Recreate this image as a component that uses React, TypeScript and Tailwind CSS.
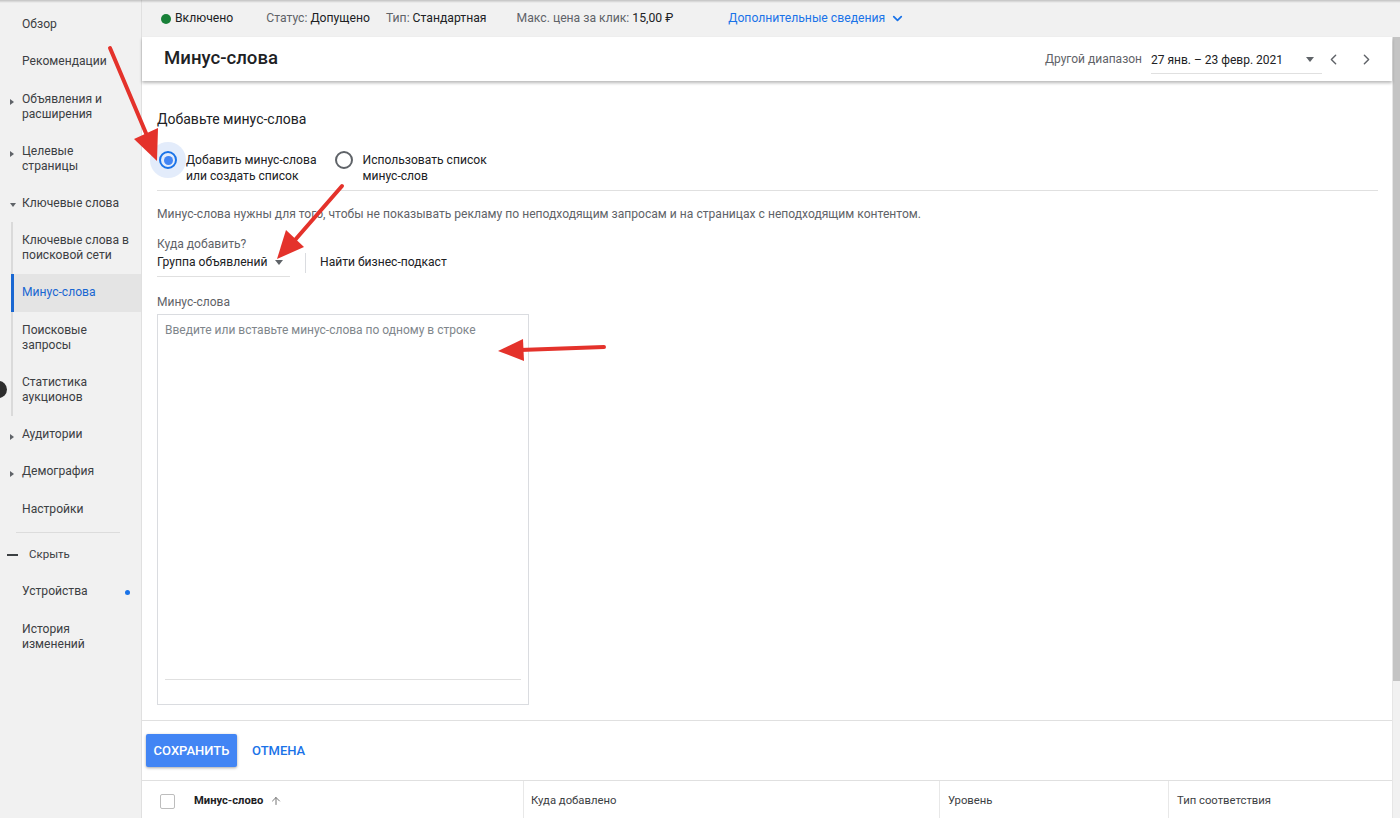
import { ChevronDown, ChevronLeft, ChevronRight, ArrowUp } from 'lucide-react';

function Caret({ down = false, big = false }: { down?: boolean; big?: boolean }) {
  if (big)
    return (
      <span className="block w-0 h-0 border-l-[4.5px] border-r-[4.5px] border-t-[5px] border-l-transparent border-r-transparent border-t-[#5f6368]" />
    );
  return down ? (
    <span className="block w-0 h-0 border-l-[3px] border-r-[3px] border-t-[4px] border-l-transparent border-r-transparent border-t-[#5f6368]" />
  ) : (
    <span className="block w-0 h-0 border-t-[3px] border-b-[3px] border-l-[4px] border-t-transparent border-b-transparent border-l-[#5f6368]" />
  );
}

function NavItem({
  lines,
  caret,
  down,
  dot,
}: {
  lines: string[];
  caret?: boolean;
  down?: boolean;
  dot?: boolean;
}) {
  const tall = lines.length > 1;
  return (
    <div className={`relative flex items-start pl-[22px] pr-2 ${tall ? 'h-[52px] pt-[11px]' : 'h-[37.5px] pt-[11.25px]'}`}>
      {caret && (
        <span className="absolute left-[10px] top-[18px]">
          <Caret down={down} />
        </span>
      )}
      <div className="text-[12.1px] leading-[15px] text-[#3c4043]">
        {lines.map((l) => (
          <div key={l}>{l}</div>
        ))}
      </div>
      {dot && <span className="absolute left-[125px] top-[17px] w-[5px] h-[5px] rounded-full bg-[#1a73e8]" />}
    </div>
  );
}

function SubItem({ lines, active }: { lines: string[]; active?: boolean }) {
  const tall = lines.length > 1;
  return (
    <div
      className={`flex items-start ${tall ? 'h-[52px] pt-[11px]' : 'h-[37.5px] pt-[11.25px]'} ${
        active ? '-ml-[2px] border-l-[3px] border-[#1967d2] bg-[#e4e4e4] pl-[8px]' : 'pl-[9px]'
      }`}
    >
      <div className={`text-[12.1px] leading-[15px] ${active ? 'text-[#1967d2]' : 'text-[#3c4043]'}`}>
        {lines.map((l) => (
          <div key={l}>{l}</div>
        ))}
      </div>
    </div>
  );
}

function Sidebar() {
  return (
    <aside className="w-[142px] shrink-0 bg-[#f1f1f1] border-r border-[#e0e0e0] pt-[5.5px]">
      <NavItem lines={['Обзор']} />
      <NavItem lines={['Рекомендации']} />
      <NavItem lines={['Объявления и', 'расширения']} caret />
      <NavItem lines={['Целевые', 'страницы']} caret />
      <NavItem lines={['Ключевые слова']} caret down />
      <div className="ml-[11px] border-l-2 border-[#dadada]">
        <SubItem lines={['Ключевые слова в', 'поисковой сети']} />
        <SubItem lines={['Минус-слова']} active />
        <SubItem lines={['Поисковые', 'запросы']} />
        <SubItem lines={['Статистика', 'аукционов']} />
      </div>
      <NavItem lines={['Аудитории']} caret />
      <NavItem lines={['Демография']} caret />
      <NavItem lines={['Настройки']} />
      <div className="mx-[16px] mt-[4px] mb-[4px] border-t border-[#dcdcdc] w-[104px]" />
      <div className="flex items-center h-[36px] pl-[7px]">
        <span className="block w-[11px] h-[2px] bg-[#3c4043]" />
        <span className="ml-[11px] text-[11.5px] text-[#3c4043]">Скрыть</span>
      </div>
      <NavItem lines={['Устройства']} dot />
      <NavItem lines={['История', 'изменений']} />
    </aside>
  );
}

function StatusBar() {
  return (
    <div className="h-[37px] shrink-0 flex items-center pl-[19px] bg-[#f1f1f1] text-[12.2px]">
      <span className="w-[10px] h-[10px] rounded-full bg-[#188038]" />
      <span className="ml-[4px] text-[#202124]">Включено</span>
      <span className="ml-[33px] text-[#5f6368]">Статус:</span>
      <span className="ml-[3px] text-[#202124]">Допущено</span>
      <span className="ml-[16px] text-[#5f6368]">Тип:</span>
      <span className="ml-[3px] text-[#202124]">Стандартная</span>
      <span className="ml-[30px] text-[#5f6368]">Макс. цена за клик:</span>
      <span className="ml-[3px] text-[#202124]">15,00 ₽</span>
      <span className="ml-[55px] text-[#1a73e8]">Дополнительные сведения</span>
      <ChevronDown className="ml-[5px] w-[15px] h-[15px] text-[#1a73e8]" strokeWidth={2.8} />
    </div>
  );
}

function Header() {
  return (
    <div className="relative z-10 h-[44px] shrink-0 flex items-center bg-white shadow-[0_2px_3px_rgba(0,0,0,0.28)] pl-[22px] pr-[17px]">
      <h1 className="text-[18.6px] font-medium text-[#202124]">Минус-слова</h1>
      <div className="ml-auto flex items-center">
        <span className="text-[12px] text-[#5f6368]">Другой диапазон</span>
        <div className="ml-[9px] w-[171px] h-[30px] flex items-center justify-between border-b border-[#e0e0e0] pt-[2px]">
          <span className="text-[12px] text-[#202124]">27 янв. – 23 февр. 2021</span>
          <span className="mr-[8px]">
            <Caret big />
          </span>
        </div>
        <ChevronLeft className="ml-[3px] w-[17px] h-[17px] text-[#5f6368]" strokeWidth={2} />
        <ChevronRight className="ml-[16px] w-[17px] h-[17px] text-[#5f6368]" strokeWidth={2} />
      </div>
    </div>
  );
}

function Radio({ checked }: { checked?: boolean }) {
  return (
    <span className="relative w-[18px] h-[18px] shrink-0">
      {checked && <span className="absolute -inset-[9px] rounded-full bg-[#e3ecfb]" />}
      <span
        className={`absolute inset-0 rounded-full border-2 flex items-center justify-center ${
          checked ? 'border-[#1a73e8]' : 'border-[#5f6368]'
        }`}
      >
        {checked && <span className="w-[9px] h-[9px] rounded-full bg-[#4285f4]" />}
      </span>
    </span>
  );
}

function Form() {
  return (
    <div className="flex-1 bg-white flex flex-col">
      <div className="pl-[15px] pr-[14px] pt-[28px]">
        <div className="text-[14px] leading-[20px] text-[#202124]">Добавьте минус-слова</div>
        <div className="mt-[22px] flex items-start">
          <div className="flex items-start ml-[2px]">
            <Radio checked />
            <div className="ml-[9px] pt-[1px] text-[12.1px] leading-[16px] text-[#202124]">
              <div>Добавить минус-слова</div>
              <div>или создать список</div>
            </div>
          </div>
          <div className="flex items-start ml-[18px]">
            <Radio />
            <div className="ml-[10px] pt-[1px] text-[12.1px] leading-[16px] text-[#202124]">
              <div>Использовать список</div>
              <div>минус-слов</div>
            </div>
          </div>
        </div>
        <div className="mt-[6px] border-t border-[#e0e0e0]" />
        <div className="mt-[15px] text-[12.1px] leading-[16px] text-[#5f6368]">
          Минус-слова нужны для того, чтобы не показывать рекламу по неподходящим запросам и на страницах с неподходящим контентом.
        </div>
        <div className="mt-[14px] text-[12.1px] leading-[16px] text-[#5f6368]">Куда добавить?</div>
        <div className="mt-[2px] flex items-start">
          <div className="w-[133px] flex items-center border-b border-[#e0e0e0] pb-[6px]">
            <span className="text-[12.1px] leading-[16px] text-[#202124]">Группа объявлений</span>
            <span className="ml-[7px]">
              <Caret big />
            </span>
          </div>
          <div className="ml-[15px] -mt-[1px] h-[20px] border-l border-[#dadce0]" />
          <span className="ml-[14px] text-[12.1px] leading-[16px] text-[#202124]">Найти бизнес-подкаст</span>
        </div>
        <div className="mt-[17px] text-[12px] leading-[16px] text-[#5f6368]">Минус-слова</div>
        <div className="mt-[4px] w-[372px] h-[391px] border border-[#dadce0] flex flex-col">
          <div className="flex-1 pt-[7px] pl-[7px] text-[12px] leading-[16px] text-[#80868b]">
            Введите или вставьте минус-слова по одному в строке
          </div>
          <div className="mx-[7px] border-t border-[#e0e0e0]" />
          <div className="h-[24px]" />
        </div>
      </div>
      <div className="mt-[15px] border-t border-[#e0e0e0]" />
      <div className="pl-[4px] pt-[13px] pb-[13px] flex items-center">
        <button className="h-[33px] w-[91px] rounded-[2px] bg-[#4285f4] text-white text-[13px] font-medium shadow-[0_1px_3px_rgba(0,0,0,0.35)]">
          СОХРАНИТЬ
        </button>
        <button className="ml-[15px] text-[#1a73e8] text-[13px] font-medium">ОТМЕНА</button>
      </div>
      <div className="border-t border-[#e0e0e0]" />
      <div className="h-[40px] flex items-stretch text-[11.3px] text-[#3c4043]">
        <div className="w-[382px] flex items-center pl-[18px] border-r border-[#e8e8e8]">
          <span className="w-[15px] h-[15px] border border-[#bdbdbd] rounded-[2px]" />
          <span className="ml-[19px] text-[11.2px] font-bold text-[#202124]">Минус-слово</span>
          <ArrowUp className="ml-[7px] w-[12px] h-[12px] text-[#757575]" strokeWidth={2} />
        </div>
        <div className="w-[416px] flex items-center pl-[7px] border-r border-[#e8e8e8]">Куда добавлено</div>
        <div className="w-[229px] flex items-center pl-[8px] border-r border-[#e8e8e8]">Уровень</div>
        <div className="flex-1 flex items-center pl-[8px]">Тип соответствия</div>
      </div>
    </div>
  );
}

function Arrows() {
  const red = '#e4322b';
  return (
    <svg className="absolute inset-0 pointer-events-none" width="1400" height="818" viewBox="0 0 1400 818">
      <line x1="110" y1="48" x2="148" y2="138" stroke={red} strokeWidth="4" strokeLinecap="round" />
      <polygon points="157,161 158,128 134,139" fill={red} />
      <line x1="342" y1="186" x2="295" y2="240" stroke={red} strokeWidth="4" strokeLinecap="round" />
      <polygon points="277,259 304,247 286,230" fill={red} />
      <line x1="604" y1="347" x2="520" y2="350" stroke={red} strokeWidth="4" strokeLinecap="round" />
      <polygon points="498,351 523,339 524,361" fill={red} />
    </svg>
  );
}

export default function App() {
  return (
    <div className="relative w-[1400px] h-[818px] overflow-hidden flex font-[Roboto,'Noto_Sans',sans-serif] bg-white">
      <Sidebar />
      <div className="flex-1 flex flex-col min-w-0">
        <StatusBar />
        <div className="flex-1 flex min-h-0">
          <div className="flex-1 flex flex-col min-w-0">
            <Header />
            <Form />
          </div>
          <div className="w-[8px] shrink-0 bg-[#f1f1f1] border-l border-[#e6e6e6] flex flex-col">
            <div className="h-[644px] bg-[#c4c4c4]" />
          </div>
        </div>
      </div>
      <div className="absolute top-0 left-0 right-0 h-[3px] bg-gradient-to-b from-black/20 to-transparent" />
      <div className="absolute left-[-10px] top-[381px] w-[17px] h-[17px] rounded-full bg-[#2d2d2d]" />
      <Arrows />
    </div>
  );
}
